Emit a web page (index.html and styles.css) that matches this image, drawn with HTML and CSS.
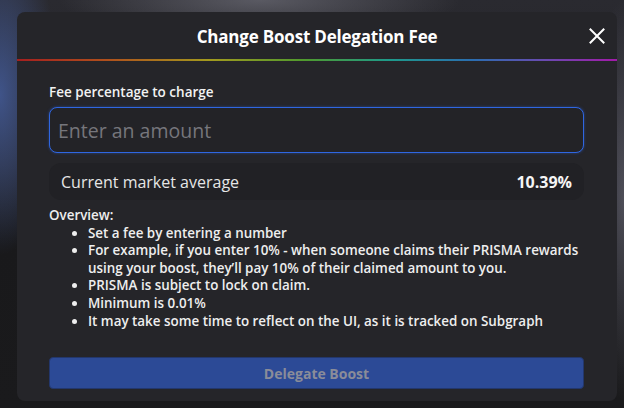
FILE: index.html
```html
<!DOCTYPE html>
<html>
<head>
<meta charset="utf-8">
<link rel="stylesheet" href="styles.css">
</head>
<body>
<div class="backdrop">
  <div class="modal">
    <div class="modal-header">
      <h1 class="modal-title">Change Boost Delegation Fee</h1>
      <button class="close-btn" aria-label="Close">
        <svg width="16" height="16" viewBox="0 0 16 16"><path d="M1.5 1.5 L14.5 14.5 M14.5 1.5 L1.5 14.5" stroke="#ffffff" stroke-width="2" stroke-linecap="square"/></svg>
      </button>
    </div>
    <div class="rainbow"></div>
    <div class="modal-body">
      <label class="field-label">Fee percentage to charge</label>
      <input class="amount-input" type="text" placeholder="Enter an amount">
      <div class="market-row">
        <span>Current market average</span>
        <span class="market-value">10.39%</span>
      </div>
      <div class="overview">
        <div class="overview-title">Overview:</div>
        <ul class="overview-list">
          <li>Set a fee by entering a number</li>
          <li>For example, if you enter 10% - when someone claims their PRISMA rewards using your boost, they’ll pay 10% of their claimed amount to you.</li>
          <li>PRISMA is subject to lock on claim.</li>
          <li>Minimum is 0.01%</li>
          <li>It may take some time to reflect on the UI, as it is tracked on Subgraph</li>
        </ul>
      </div>
      <button class="submit-btn" disabled>Delegate Boost</button>
    </div>
  </div>
</div>
</body>
</html>
```
FILE: styles.css
```css
* { box-sizing: border-box; }
html, body { margin: 0; padding: 0; }
body {
  width: 624px;
  height: 408px;
  overflow: hidden;
  font-family: "Open Sans", "Liberation Sans", sans-serif;
  background: #1b1b1e;
}
.backdrop {
  width: 624px;
  height: 408px;
  padding: 12px 7px 0 17px;
  background:
    radial-gradient(ellipse 60px 160px at 0px 95px, rgba(70,95,160,0.8), rgba(70,95,160,0) 100%),
    radial-gradient(ellipse 200px 40px at 260px 0px, rgba(110,110,120,0.7), rgba(110,110,120,0) 100%),
    radial-gradient(ellipse 40px 200px at 624px 200px, rgba(110,110,125,0.6), rgba(110,110,125,0) 100%),
    linear-gradient(180deg, #2a2a30 0%, #232327 40%, #19191b 60%, #1a1a1c 100%);
}
.modal {
  width: 600px;
  height: 389px;
  background: #252529;
  border-radius: 8px;
  display: flex;
  flex-direction: column;
}
.modal-header {
  height: 47px;
  display: flex;
  align-items: center;
  justify-content: center;
  position: relative;
}
.modal-title {
  margin: 0;
  font-size: 17px;
  font-weight: 700;
  color: #ffffff;
  letter-spacing: -0.2px;
  padding-top: 1px;
}
.close-btn {
  position: absolute;
  right: 12px;
  top: 16px;
  background: none;
  border: 0;
  padding: 0;
  width: 16px;
  height: 16px;
  display: flex;
}
.rainbow {
  height: 2px;
  background: linear-gradient(90deg, #a51f1f 0%, #b0501c 15%, #a39a1e 32%, #4f9a2e 48%, #1e9a8a 62%, #2b6db0 76%, #6a4ab0 88%, #a21aa8 100%);
}
.modal-body {
  padding: 23px 33px 0 32px;
  display: flex;
  flex-direction: column;
}
.field-label {
  font-size: 13.5px;
  font-weight: 600;
  color: #f2f2f2;
  line-height: 16px;
}
.amount-input {
  margin-top: 7px;
  height: 46px;
  width: 100%;
  background: #232327;
  border: 1px solid #2f66e0;
  border-radius: 8px;
  box-shadow: 0 0 3px rgba(47,102,224,0.5);
  padding: 0 8px;
  font-family: "Open Sans", "Liberation Sans", sans-serif;
  font-size: 19.5px;
  color: #ddd;
  outline: none;
}
.amount-input::placeholder { color: #76767c; }
.market-row {
  margin-top: 10px;
  height: 37px;
  border-radius: 12px;
  background: #212125;
  display: flex;
  align-items: center;
  justify-content: space-between;
  padding: 0 12px;
  font-size: 16px;
  color: #e6e6e6;
}
.market-value { font-weight: 700; color: #f5f5f5; }
.overview {
  margin-top: 7px;
  font-size: 13.4px;
  font-weight: 600;
  color: #eeeeee;
  line-height: 17.6px;
}
.overview-list {
  margin: 0 -4px 0 0;
  padding-left: 39px;
}
.submit-btn {
  margin-top: 27px;
  height: 32px;
  width: 100%;
  background: #2c4a96;
  border: 1px solid #23376c;
  border-radius: 4px;
  color: #8a8c99;
  font-family: "Open Sans", "Liberation Sans", sans-serif;
  font-size: 14px;
  font-weight: 700;
}
```
